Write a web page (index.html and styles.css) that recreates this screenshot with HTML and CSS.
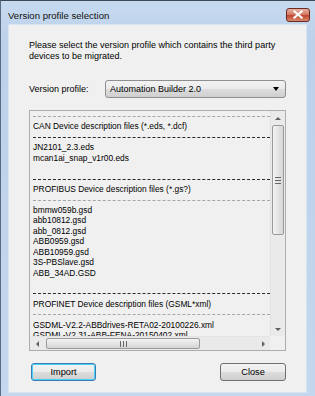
FILE: index.html
```html
<!DOCTYPE html>
<html lang="en">
<head>
    <meta charset="UTF-8">
    <title>Version profile selection</title>
    <link rel="stylesheet" href="styles.css">
</head>
<body>
    <div class="window">
        <div class="titlebar">
            <span class="title">Version profile selection</span>
            <div class="closeBtn">
                <svg width="12" height="9" viewBox="0 0 12 9"><path d="M2.5 1.5 L9.5 7.5 M9.5 1.5 L2.5 7.5" stroke="#fff" stroke-width="2.2" stroke-linecap="square"/></svg>
            </div>
        </div>
        <div class="client">
            <p class="intro">Please select the version profile which contains the third party devices to be migrated.</p>
            <div class="profileRow">
                <label>Version profile:</label>
                <div class="combo">
                    <span>Automation Builder 2.0</span>
                    <span class="comboArrow"></span>
                </div>
            </div>
            <div class="listBox">
                <div class="listContent">
                    <div class="sep light"></div>
                    <div class="line">CAN Device description files (*.eds, *.dcf)</div>
                    <div class="sep"></div>
                    <div class="line">JN2101_2.3.eds</div>
                    <div class="line">mcan1ai_snap_v1r00.eds</div>
                    <div class="line"></div>
                    <div class="sep"></div>
                    <div class="line">PROFIBUS Device description files (*.gs?)</div>
                    <div class="sep light"></div>
                    <div class="line">bmmw059b.gsd</div>
                    <div class="line">abb10812.gsd</div>
                    <div class="line">abb_0812.gsd</div>
                    <div class="line">ABB0959.gsd</div>
                    <div class="line">ABB10959.gsd</div>
                    <div class="line">3S-PBSlave.gsd</div>
                    <div class="line">ABB_34AD.GSD</div>
                    <div class="line"></div>
                    <div class="sep"></div>
                    <div class="line">PROFINET Device description files (GSML*xml)</div>
                    <div class="sep light"></div>
                    <div class="line">GSDML-V2.2-ABBdrives-RETA02-20100226.xml</div>
                    <div class="line">GSDML-V2.31-ABB-FENA-20150402.xml</div>
                </div>
                <div class="vScroll">
                    <div class="arrowBox"><span class="tri up"></span></div>
                    <div class="vTrack">
                        <div class="vThumb"><span class="grip"></span></div>
                    </div>
                    <div class="arrowBox"><span class="tri down"></span></div>
                </div>
                <div class="hScroll">
                    <div class="arrowBox"><span class="tri left"></span></div>
                    <div class="hTrack">
                        <div class="hThumb"><span class="grip"></span></div>
                    </div>
                    <div class="arrowBox"><span class="tri right"></span></div>
                </div>
                <div class="corner"></div>
            </div>
            <div class="buttons">
                <div class="btn default">Import</div>
                <div class="btn">Close</div>
            </div>
        </div>
    </div>
</body>
</html>
```

FILE: styles.css
```css
body {
    margin: 0;
    background: #fff;
    font-family: 'Liberation Sans', Arial, sans-serif;
    overflow: hidden;
}
.window {
    width: 315px;
    height: 396px;
    box-sizing: border-box;
    border-top: 1px solid #3d4a5a;
    border-left: 1px solid #5a6a80;
    background: linear-gradient(#c6d9ef, #bcd2ea 40px, #c3d7ee);
    padding: 0 8px 3px 7px;
    display: flex;
    flex-direction: column;
}
.titlebar {
    height: 23px;
    display: flex;
    align-items: center;
    justify-content: space-between;
}
.title {
    font-size: 9.6px;
    color: #111;
    padding-top: 5px;
}
.closeBtn {
    width: 24px;
    height: 14px;
    margin-right: -3px;
    margin-top: 4px;
    box-sizing: border-box;
    border: 1px solid #6b2a22;
    border-radius: 3px;
    background: linear-gradient(#eab0a2, #d37a66 45%, #c0462f 55%, #d98d6e);
    display: flex;
    align-items: center;
    justify-content: center;
}
.client {
    flex: 1;
    background: #f0f0f0;
    border: 1px solid #d9e4f1;
    padding: 0 20px 0 20px;
    display: flex;
    flex-direction: column;
    font-size: 9px;
    color: #000;
}
.intro {
    margin: 15px 0 0 0;
    line-height: 11px;
    padding-right: 10px;
}
.profileRow {
    display: flex;
    align-items: center;
    margin-top: 18px;
}
.profileRow label {
    width: 76px;
}
.combo {
    flex: 1;
    height: 18px;
    box-sizing: border-box;
    border: 1px solid #8e8f8f;
    border-radius: 3px;
    background: linear-gradient(#f2f2f2, #ebebeb 50%, #dddddd 51%, #cfcfcf);
    display: flex;
    align-items: center;
    justify-content: space-between;
    padding: 0 6px 0 4px;
}
.comboArrow {
    width: 0;
    height: 0;
    border-left: 3.5px solid transparent;
    border-right: 3.5px solid transparent;
    border-top: 4px solid #000;
}
.listBox {
    margin-top: 12px;
    height: 241px;
    box-sizing: border-box;
    border: 1px solid #abadb3;
    background: #f0f0f0;
    display: grid;
    grid-template-columns: 1fr 15px;
    grid-template-rows: 1fr 14px;
}
.listContent {
    overflow: hidden;
    padding: 0 0 0 3px;
    font-size: 8.4px;
    white-space: nowrap;
}
.line {
    height: 10.45px;
    line-height: 10.45px;
}
.sep {
    height: 10.45px;
    box-sizing: border-box;
    padding-top: 5px;
}
.sep::before {
    content: '';
    display: block;
    border-top: 1px dashed #2a2a2a;
}
.sep.light::before {
    border-top: 1px dashed #a3a6aa;
}
.vScroll {
    display: flex;
    flex-direction: column;
    background: #eaeaea;
    border-left: 1px solid #e3e3e3;
}
.arrowBox {
    width: 14px;
    height: 14px;
    display: flex;
    align-items: center;
    justify-content: center;
    flex-shrink: 0;
}
.tri {
    width: 0;
    height: 0;
}
.tri.up {
    border-left: 3px solid transparent;
    border-right: 3px solid transparent;
    border-bottom: 3px solid #606060;
}
.tri.down {
    border-left: 3px solid transparent;
    border-right: 3px solid transparent;
    border-top: 3px solid #606060;
}
.tri.left {
    border-top: 3px solid transparent;
    border-bottom: 3px solid transparent;
    border-right: 3px solid #606060;
}
.tri.right {
    border-top: 3px solid transparent;
    border-bottom: 3px solid transparent;
    border-left: 3px solid #606060;
}
.vTrack {
    flex: 1;
    padding: 0 1px;
}
.vThumb {
    height: 110px;
    box-sizing: border-box;
    border: 1px solid #9a9a9a;
    border-radius: 2px;
    background: linear-gradient(90deg, #f4f4f4, #e4e4e4 50%, #d6d6d6);
    display: flex;
    align-items: center;
    justify-content: center;
}
.vThumb .grip {
    width: 6px;
    height: 5px;
    border-top: 1px solid #666;
    border-bottom: 1px solid #666;
    background: linear-gradient(#666, #666) center / 100% 1px no-repeat;
}
.hScroll {
    display: flex;
    background: #eaeaea;
    border-top: 1px solid #e3e3e3;
}
.hTrack {
    flex: 1;
    padding: 1px 0;
}
.hThumb {
    width: 154px;
    height: 100%;
    box-sizing: border-box;
    margin-left: 2px;
    border: 1px solid #9a9a9a;
    border-radius: 2px;
    background: linear-gradient(#f4f4f4, #e4e4e4 50%, #d6d6d6);
    display: flex;
    align-items: center;
    justify-content: center;
}
.hThumb .grip {
    width: 5px;
    height: 6px;
    border-left: 1px solid #666;
    border-right: 1px solid #666;
    background: linear-gradient(#666, #666) center / 1px 100% no-repeat;
}
.corner {
    background: #f0f0f0;
}
.buttons {
    display: flex;
    justify-content: space-between;
    margin-top: 12px;
    padding-left: 2px;
}
.btn {
    width: 66px;
    height: 18px;
    box-sizing: border-box;
    border: 1px solid #707070;
    border-radius: 3px;
    background: linear-gradient(#f2f2f2, #ebebeb 50%, #dddddd 51%, #cfcfcf);
    display: flex;
    align-items: center;
    justify-content: center;
    font-size: 9.2px;
}
.btn.default {
    width: 65px;
    border-color: #3c7fb1;
    box-shadow: inset 0 0 0 1px #48d0f8;
}
```
